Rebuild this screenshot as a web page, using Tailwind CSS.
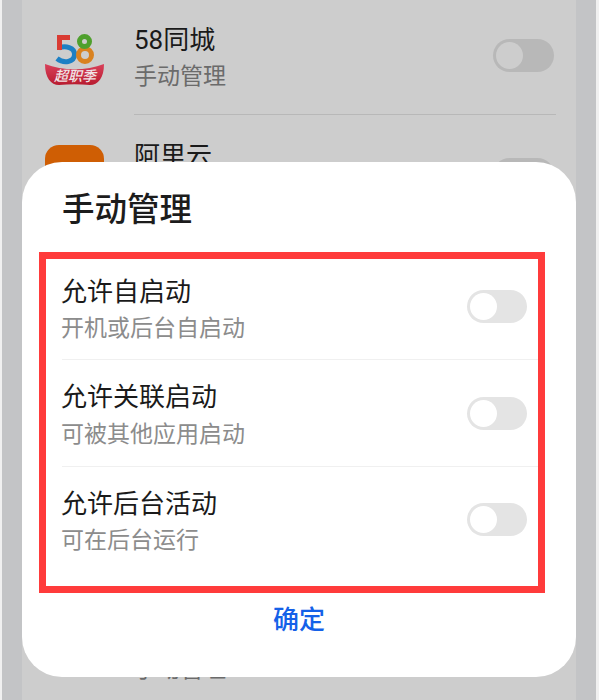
<!DOCTYPE html>
<html lang="zh">
<head>
<meta charset="utf-8">
<script src="https://cdn.jsdelivr.net/npm/@tailwindcss/browser@4"></script>
</head>
<body class="m-0 bg-[#f0f0f0] font-['Roboto','Noto_Sans_CJK_SC',sans-serif]">
<div class="relative w-[599px] h-[700px] overflow-hidden pl-[2px] pr-[3px]">
  <!-- dimmed page -->
  <div class="h-[700px] bg-[#c3c4c6] px-[20px]">
    <div class="h-[700px] bg-[#cdcdcd] overflow-hidden">
      <!-- row 1 -->
      <div class="flex h-[115px] pl-[23px] pr-[20px]">
        <svg class="mt-[30px] w-[60px] h-[56px] shrink-0" viewBox="0 0 60 56">
          <defs>
            <linearGradient id="banner" x1="0" y1="0" x2="0" y2="1">
              <stop offset="0" stop-color="#d9405a"/>
              <stop offset="1" stop-color="#b81c30"/>
            </linearGradient>
          </defs>
          <path d="M0 34 C18 41 41 41 59 34 C59 48 53 55 45 55 C35 54 24 54 14 55 C6 55 0 48 0 34Z" fill="url(#banner)"/>
          <text x="9" y="51" font-size="14" font-weight="500" font-style="italic" fill="#f0e4e6" font-family="'Noto Sans CJK SC',sans-serif">超职季</text>
          <path d="M14 18 C20 15.500 30 17 29.500 25 C29 32 19 34 12 28.500" fill="none" stroke="#1d80c4" stroke-width="5"/>
          <path d="M25 7.500H14.500V20" fill="none" stroke="#d93b33" stroke-width="5"/>
          <circle cx="40" cy="25" r="6.500" fill="none" stroke="#d98220" stroke-width="5"/>
          <circle cx="39.500" cy="11.500" r="5" fill="none" stroke="#4fa02d" stroke-width="5"/>
        </svg>
        <div class="ml-[29px] flex-1 border-b border-[#b8b8b8] flex">
          <div class="flex-1 pt-[22px]">
            <div class="text-[26px] leading-[36px] text-[#1a1a1a]">58同城</div>
            <div class="mt-[1px] text-[23px] leading-[36px] text-[#6b6b6b]">手动管理</div>
          </div>
          <div class="mt-[39px] w-[61px] h-[33px] rounded-full bg-[#b8b8b8] p-[3px] mr-[2px]">
            <div class="w-[27px] h-[27px] rounded-full bg-[#cdcdcd]"></div>
          </div>
        </div>
      </div>
      <!-- row 2 -->
      <div class="flex h-[120px] pl-[23px] pr-[20px]">
        <div class="mt-[30px] w-[59px] h-[59px] rounded-[14px] bg-[#cf5e04] shrink-0"></div>
        <div class="ml-[30px] flex-1 flex">
          <div class="flex-1 pt-[23px]">
            <div class="text-[26px] leading-[36px] text-[#1a1a1a]">阿里云</div>
          </div>
          <div class="mt-[43px] w-[61px] h-[33px] rounded-full bg-[#b8b8b8] mr-[2px]"></div>
        </div>
      </div>
      <!-- rows hidden under the dialog -->
      <div class="h-[360px]"></div>
      <!-- last row, peeking below the dialog -->
      <div class="flex h-[105px] pl-[23px] pr-[20px]">
        <div class="mt-[30px] w-[59px] h-[50px] shrink-0 flex items-end pl-[20px]">
          <div class="w-[10px] h-[4px] bg-[#d9304a]"></div>
          <div class="w-[10px] h-[4px] bg-[#2f74d0]"></div>
        </div>
        <div class="ml-[30px] flex-1 pt-[21px]">
          <div class="text-[26px] leading-[36px] text-[#1a1a1a]">&nbsp;</div>
          <div class="text-[23px] leading-[36px] text-[#6b6b6b]">手动管理</div>
        </div>
      </div>
    </div>
  </div>
  <!-- dialog -->
  <div class="absolute left-[22px] top-[162px] w-[554px] h-[515px] bg-white rounded-[40px] overflow-hidden">
    <h2 class="ml-[40px] mt-[26px] h-[44px] text-[32.5px] leading-[44px] font-medium text-[#1c1c1c]">手动管理</h2>
    <div class="ml-[17px] mt-[20px] w-[506px] h-[341px] border-[7px] border-[#ff3b3b] pl-[16px]">
      <div class="flex h-[101px] border-b border-[#f0f0f0] items-start">
        <div class="flex-1 pt-[15px] -ml-[1px]">
          <div class="text-[26px] leading-[36px] text-[#1a1a1a]">允许自启动</div>
          <div class="mt-[1px] text-[23px] leading-[36px] text-[#8c8c8c]">开机或后台自启动</div>
        </div>
        <div class="mt-[31px] mr-[11px] w-[60px] h-[33px] rounded-full bg-[#e4e4e4] p-[3px]"><div class="w-[27px] h-[27px] rounded-full bg-white"></div></div>
      </div>
      <div class="flex h-[107px] border-b border-[#f0f0f0] items-start">
        <div class="flex-1 pt-[19px] -ml-[1px]">
          <div class="text-[26px] leading-[36px] text-[#1a1a1a]">允许关联启动</div>
          <div class="mt-[2px] text-[23px] leading-[36px] text-[#8c8c8c]">可被其他应用启动</div>
        </div>
        <div class="mt-[37px] mr-[11px] w-[60px] h-[33px] rounded-full bg-[#e4e4e4] p-[3px]"><div class="w-[27px] h-[27px] rounded-full bg-white"></div></div>
      </div>
      <div class="flex h-[106px] items-start">
        <div class="flex-1 pt-[19px] -ml-[1px]">
          <div class="text-[26px] leading-[36px] text-[#1a1a1a]">允许后台活动</div>
          <div class="mt-[1px] text-[23px] leading-[36px] text-[#8c8c8c]">可在后台运行</div>
        </div>
        <div class="mt-[36px] mr-[11px] w-[60px] h-[33px] rounded-full bg-[#e4e4e4] p-[3px]"><div class="w-[27px] h-[27px] rounded-full bg-white"></div></div>
      </div>
    </div>
    <div class="mt-[9px] text-center text-[26px] leading-[36px] font-medium text-[#1461e8]">确定</div>
  </div>
</div>
</body>
</html>
